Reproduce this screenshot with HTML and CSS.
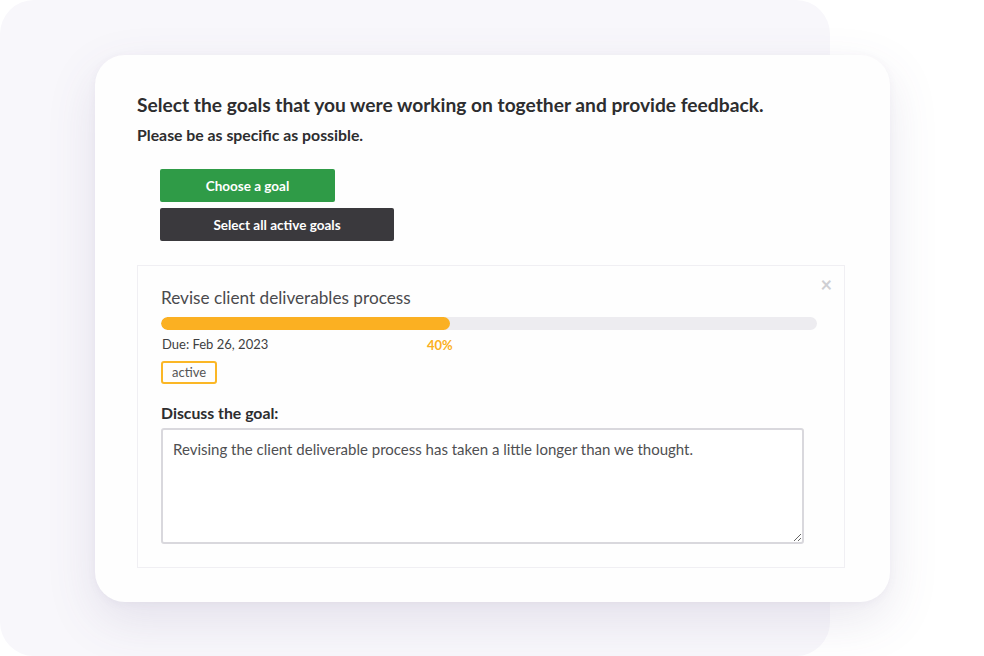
FILE: index.html
```html
<!DOCTYPE html>
<html lang="en">
<head>
<meta charset="utf-8">
<title>Goals feedback</title>
<link rel="stylesheet" href="styles.css">
</head>
<body>
<div class="stage">
  <div class="backdrop"></div>
  <main class="card">
    <h1 class="title">Select the goals that you were working on together and provide feedback.</h1>
    <p class="subtitle">Please be as specific as possible.</p>
    <div class="actions">
      <button class="btn btn-green">Choose a goal</button>
      <button class="btn btn-dark">Select all active goals</button>
    </div>
    <section class="goal">
      <span class="close">&times;</span>
      <h2 class="goal-title">Revise client deliverables process</h2>
      <div class="progress"><div class="progress-fill" style="width:44%"></div></div>
      <div class="meta">
        <span class="due">Due: Feb 26, 2023</span>
        <span class="pct" style="left:42.5%">40%</span>
      </div>
      <span class="tag">active</span>
      <label class="discuss" for="fb">Discuss the goal:</label>
      <textarea id="fb" class="fb">Revising the client deliverable process has taken a little longer than we thought.</textarea>
    </section>
  </main>
</div>
</body>
</html>
```

FILE: styles.css
```css
* { box-sizing: border-box; }
html, body { margin: 0; padding: 0; background: #ffffff; }
body { font-family: "Lato", "Open Sans", sans-serif; color: #333; }

.stage {
  position: relative;
  width: 984px;
  height: 656px;
  overflow: hidden;
  padding: 55px 0 0 95px;
}

.backdrop {
  position: absolute;
  left: 0;
  top: 0;
  width: 830px;
  height: 656px;
  background: #f8f7fb;
  border-radius: 34px;
  z-index: 0;
}

.card {
  position: relative;
  z-index: 1;
  width: 795px;
  height: 547px;
  background: #fefefe;
  border-radius: 30px;
  box-shadow: 0 18px 50px rgba(90, 80, 130, 0.13), 0 2px 8px rgba(90, 80, 130, 0.05);
  padding: 38px 45px 0 42px;
}

.title {
  margin: 0;
  font-size: 19.2px;
  line-height: 24px;
  font-weight: 700;
  color: #2d2d2f;
}

.subtitle {
  margin: 8px 0 0;
  font-size: 15.8px;
  line-height: 20px;
  font-weight: 700;
  color: #2d2d2f;
}

.actions {
  display: flex;
  flex-direction: column;
  align-items: flex-start;
  gap: 6px;
  margin: 24px 0 0 23px;
}

.btn {
  border: 0;
  border-radius: 2px;
  height: 33px;
  font-family: inherit;
  font-size: 13.5px;
  font-weight: 700;
  color: #fff;
  padding: 0;
}
.btn-green { width: 175px; background: #2f9b47; }
.btn-dark { width: 234px; background: #3a393d; }

.goal {
  position: relative;
  margin-top: 24px;
  width: 708px;
  height: 303px;
  border: 1px solid #f0eff3;
  padding: 20px 28px 0 23px;
  display: flex;
  flex-direction: column;
  align-items: flex-start;
}

.close {
  position: absolute;
  top: 8px;
  right: 12px;
  font-size: 20px;
  font-weight: 700;
  color: #cfcfd3;
  line-height: 20px;
}

.goal-title {
  margin: 0;
  font-size: 17.2px;
  line-height: 24px;
  font-weight: 400;
  color: #4a4a4d;
}

.progress {
  margin-top: 7px;
  width: 656px;
  height: 13px;
  border-radius: 7px;
  background: #edecf0;
  overflow: hidden;
}
.progress-fill { height: 100%; background: #fbb022; border-radius: 7px; }

.meta {
  position: relative;
  width: 656px;
  margin-top: 5px;
  height: 18px;
  font-size: 13px;
  line-height: 18px;
}
.due { color: #3e3e41; padding-left: 1px; }
.pct {
  position: absolute;
  top: 1px;
  transform: translateX(-50%);
  color: #fbb022;
  font-weight: 700;
  font-size: 13px;
}

.tag {
  margin-top: 8px;
  height: 23px;
  padding: 0 9px;
  border: 2px solid #fbb726;
  border-radius: 3px;
  font-size: 13px;
  line-height: 19px;
  color: #555;
}

.discuss {
  margin-top: 19px;
  font-size: 15.8px;
  line-height: 20px;
  font-weight: 700;
  color: #2d2d2f;
}

.fb {
  margin-top: 5px;
  width: 643px;
  height: 116px;
  border: 2px solid #d9d8dd;
  border-radius: 3px;
  padding: 9px 10px;
  font-family: inherit;
  font-size: 15px;
  line-height: 20px;
  color: #4f4f52;
  background: #fff;
  resize: both;
}
```
